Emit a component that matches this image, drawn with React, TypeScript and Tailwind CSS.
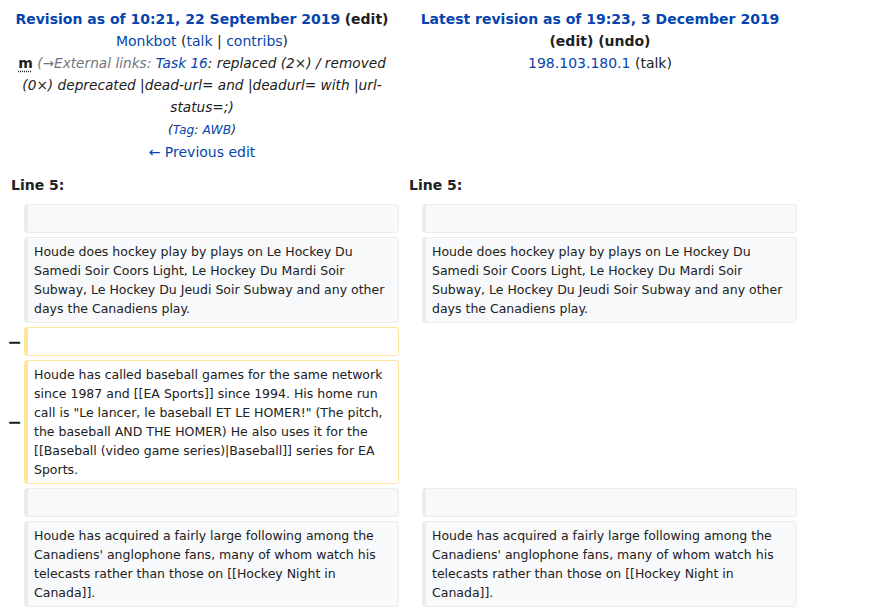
import React from "react";

const link = "text-[#0645ad]";

function Box({ kind, children }: { kind: "ctx" | "del"; children?: React.ReactNode }) {
  const cls =
    kind === "ctx"
      ? "border-[#eaecf0] bg-[#f8f9fa]"
      : "border-[#ffe49c] bg-white";
  return (
    <div
      className={`${cls} border border-l-4 rounded-[4px] px-[6px] py-1 text-[12.5px] leading-[19px] text-[#202122] whitespace-pre-wrap break-words`}
    >
      {children ? children : <div className="h-[19px]" />}
    </div>
  );
}

function Marker({ show }: { show?: boolean }) {
  return (
    <div className="flex items-center justify-end">
      {show ? (
        <span className="font-bold text-[17.5px] leading-[20px] text-[#202122] mr-[-2px]">−</span>
      ) : null}
    </div>
  );
}

export default function App() {
  return (
    <div
      className="bg-white min-h-[612px] w-[874px] text-[#202122]"
      style={{ fontFamily: '"DejaVu Sans", sans-serif' }}
    >
      <div className="ml-px w-[800px] grid grid-cols-[15px_375px_15px_375px] gap-1 p-1">
        {/* Header */}
        <div className="col-span-2 text-center px-[7px] py-1 text-[14px] leading-[22px]">
          <div>
            <span className={`font-bold ${link}`}>Revision as of 10:21, 22 September 2019</span>{" "}
            <span className="font-bold">(edit)</span>
          </div>
          <div>
            <span className={link}>Monkbot</span> (<span className={link}>talk</span> |{" "}
            <span className={link}>contribs</span>)
          </div>
          <div>
            <span className="font-bold underline decoration-dotted decoration-[#202122] underline-offset-[3px]">m</span>{" "}
            <span className="italic text-[13.7px]">
              <span className="text-[#72777d]">(→External links: </span>
              <span className={link}>Task 16</span>: replaced (2×) / removed (0×) deprecated
              |dead-url= and |deadurl= with |url-status=;)
            </span>
          </div>
          <div className="italic">
            <span className="text-[12.32px]">
              (<span className={link}>Tag</span>: <span className={link}>AWB</span>)
            </span>
          </div>
          <div>
            <span className={link}>← Previous edit</span>
          </div>
        </div>
        <div className="col-span-2 text-center px-[7px] py-1 text-[14px] leading-[22px]">
          <div>
            <span className={`font-bold ${link}`}>Latest revision as of 19:23, 3 December 2019</span>{" "}
            <span className="font-bold">(edit) (undo)</span>
          </div>
          <div>
            <span className={link}>198.103.180.1</span> (talk)
          </div>
        </div>

        {/* Line numbers */}
        <div className="col-span-2 px-[6px] pt-[3px] pb-1 text-[14px] leading-[22px] font-bold">Line 5:</div>
        <div className="col-span-2 px-[6px] pt-[3px] pb-1 text-[14px] leading-[22px] font-bold">Line 5:</div>

        {/* context empty */}
        <Marker />
        <Box kind="ctx" />
        <Marker />
        <Box kind="ctx" />

        {/* context text */}
        <Marker />
        <Box kind="ctx">
          Houde does hockey play by plays on Le Hockey Du Samedi Soir Coors Light, Le Hockey Du Mardi Soir Subway, Le Hockey Du Jeudi Soir Subway and any other days the Canadiens play.
        </Box>
        <Marker />
        <Box kind="ctx">
          Houde does hockey play by plays on Le Hockey Du Samedi Soir Coors Light, Le Hockey Du Mardi Soir Subway, Le Hockey Du Jeudi Soir Subway and any other days the Canadiens play.
        </Box>

        {/* deleted empty */}
        <Marker show />
        <Box kind="del" />
        <div className="col-span-2" />

        {/* deleted text */}
        <Marker show />
        <Box kind="del">
          Houde has called baseball games for the same network since 1987 and [[EA Sports]] since 1994. His home run call is "Le lancer, le baseball ET LE HOMER!" (The pitch, the baseball AND THE HOMER) He also uses it for the [[Baseball (video game series)|Baseball]] series for EA Sports.
        </Box>
        <div className="col-span-2" />

        {/* context empty */}
        <Marker />
        <Box kind="ctx" />
        <Marker />
        <Box kind="ctx" />

        {/* context text */}
        <Marker />
        <Box kind="ctx">
          Houde has acquired a fairly large following among the Canadiens' anglophone fans, many of whom watch his telecasts rather than those on [[Hockey Night in Canada]].
        </Box>
        <Marker />
        <Box kind="ctx">
          Houde has acquired a fairly large following among the Canadiens' anglophone fans, many of whom watch his telecasts rather than those on [[Hockey Night in Canada]].
        </Box>
      </div>
    </div>
  );
}
